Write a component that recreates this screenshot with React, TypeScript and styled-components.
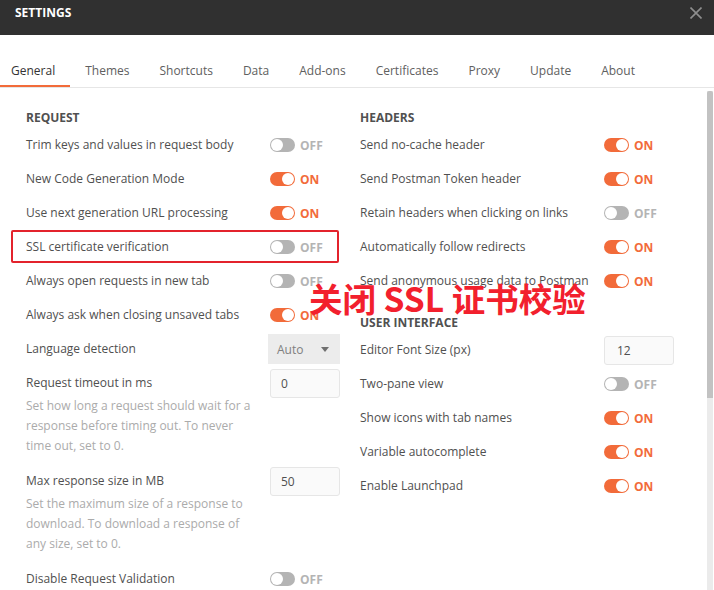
import React from "react";
import styled, { createGlobalStyle } from "styled-components";

const GlobalStyle = createGlobalStyle`
  html, body { margin: 0; padding: 0; background: #ffffff; }
  body { font-family: "Open Sans", "Noto Sans", sans-serif; font-size: 12px; color: #505050; }
  * { box-sizing: border-box; }
`;

const ORANGE = "#f26b3a";

const Window = styled.div`
  position: relative;
  width: 714px;
  height: 590px;
  overflow: hidden;
  display: flex;
  flex-direction: column;
  background: #fff;
`;

const TitleBar = styled.header`
  height: 35px;
  flex: none;
  background: #303030;
  display: flex;
  justify-content: space-between;
  align-items: flex-start;
  padding: 5px 12px 0 15px;
`;

const Title = styled.h1`
  margin: 0;
  font-size: 12px;
  line-height: 16px;
  font-weight: 700;
  color: #ffffff;
`;

const CloseButton = styled.button`
  border: 0;
  background: transparent;
  padding: 0;
  margin-top: 2px;
  width: 12px;
  height: 12px;
  display: flex;
  cursor: pointer;
`;

const TabBar = styled.nav`
  flex: none;
  display: flex;
  padding-top: 21px;
  border-bottom: 1px solid #e6e6e6;
`;

const Tab = styled.div<{ $active?: boolean }>`
  height: 31px;
  line-height: 29px;
  padding: 0 15px;
  font-size: 12px;
  color: ${(p) => (p.$active ? "#333" : "#606060")};
  border-bottom: 2px solid ${(p) => (p.$active ? ORANGE : "transparent")};
  &:first-child { padding-left: 11px; }
`;

const Body = styled.div`
  flex: 1;
  min-height: 0;
  display: flex;
`;

const Content = styled.main`
  flex: 1;
  display: grid;
  grid-template-columns: 314px 314px;
  column-gap: 20px;
  align-content: start;
  padding: 20px 0 0 26px;
`;

const Column = styled.section`
  display: flex;
  flex-direction: column;
`;

const SectionTitle = styled.h2<{ $spaced?: boolean }>`
  margin: ${(p) => (p.$spaced ? "15px" : "0")} 0 0;
  font-size: 12px;
  line-height: 20px;
  font-weight: 700;
  color: #505050;
  text-transform: uppercase;
`;

const Row = styled.div<{ $highlight?: boolean }>`
  position: relative;
  height: 34px;
  display: flex;
  align-items: center;
  justify-content: space-between;
  ${(p) =>
    p.$highlight
      ? `&::before {
    content: "";
    position: absolute;
    left: -15px;
    right: 1px;
    top: 0;
    bottom: 1px;
    border: 2px solid #e3232c;
    border-radius: 2px;
    pointer-events: none;
  }`
      : ""}
`;

const Label = styled.span`
  font-size: 12px;
  line-height: 20px;
  color: #505050;
  white-space: nowrap;
`;

const Control = styled.div`
  width: 70px;
  flex: none;
  display: flex;
  align-items: center;
`;

const Track = styled.span<{ $on: boolean }>`
  position: relative;
  width: 25px;
  height: 14px;
  border-radius: 7px;
  background: ${(p) => (p.$on ? ORANGE : "#b4b4b4")};
  flex: none;
`;

const Knob = styled.span<{ $on: boolean }>`
  position: absolute;
  top: 1px;
  left: ${(p) => (p.$on ? "12px" : "1px")};
  width: 12px;
  height: 12px;
  border-radius: 50%;
  background: #ffffff;
`;

const ToggleText = styled.span<{ $on: boolean }>`
  margin-left: 5px;
  font-size: 12px;
  font-weight: 700;
  color: ${(p) => (p.$on ? ORANGE : "#b4b4b4")};
`;

const Toggle = ({ on }: { on: boolean }) => (
  <Control>
    <Track $on={on}>
      <Knob $on={on} />
    </Track>
    <ToggleText $on={on}>{on ? "ON" : "OFF"}</ToggleText>
  </Control>
);

const SelectBox = styled.div`
  width: 72px;
  height: 30px;
  margin-left: -2px;
  background: #ececec;
  display: flex;
  align-items: center;
  justify-content: space-between;
  padding: 0 11px 0 9px;
  color: #808080;
  font-size: 12px;
`;

const Caret = styled.span`
  width: 0;
  height: 0;
  border-left: 4px solid transparent;
  border-right: 4px solid transparent;
  border-top: 5px solid #707070;
`;

const NumberBox = styled.input<{ $pad?: number }>`
  width: 70px;
  height: 29px;
  border: 1px solid #e6e6e6;
  border-radius: 3px;
  background: #fafafa;
  padding: 0 ${(p) => p.$pad ?? 10}px;
  font-family: "Open Sans", sans-serif;
  font-size: 12px;
  color: #505050;
  outline: none;
`;

const DescRow = styled.div`
  display: flex;
  justify-content: space-between;
  align-items: flex-start;
  padding: 7px 0 8px;
`;

const DescText = styled.div`
  display: flex;
  flex-direction: column;
`;

const Description = styled.p`
  margin: 3px 0 0;
  width: 229px;
  font-size: 12px;
  line-height: 20px;
  color: #ababab;
`;

const InputSlot = styled.div`
  width: 70px;
  margin-top: -4px;
  flex: none;
`;

const ScrollTrack = styled.div`
  width: 6px;
  margin: 3px 1px 0 0;
  background: #ebebeb;
  flex: none;
  display: flex;
  flex-direction: column;
`;

const ScrollThumb = styled.div`
  height: 307px;
  background: #c2c2c2;
  border-radius: 2px 2px 0 0;
`;

const Annotation = styled.div`
  position: absolute;
  left: 309px;
  top: 279px;
  font-family: "Noto Sans CJK SC", "Noto Sans", sans-serif;
  font-size: 33.5px;
  line-height: 38px;
  font-weight: 700;
  color: #f2202d;
  white-space: nowrap;
  pointer-events: none;
`;

const tabs = ["General", "Themes", "Shortcuts", "Data", "Add-ons", "Certificates", "Proxy", "Update", "About"];

const requestToggles: [string, boolean, boolean?][] = [
  ["Trim keys and values in request body", false],
  ["New Code Generation Mode", true],
  ["Use next generation URL processing", true],
  ["SSL certificate verification", false, true],
  ["Always open requests in new tab", false],
  ["Always ask when closing unsaved tabs", true],
];

const headerToggles: [string, boolean][] = [
  ["Send no-cache header", true],
  ["Send Postman Token header", true],
  ["Retain headers when clicking on links", false],
  ["Automatically follow redirects", true],
  ["Send anonymous usage data to Postman", true],
];

const uiToggles: [string, boolean][] = [
  ["Two-pane view", false],
  ["Show icons with tab names", true],
  ["Variable autocomplete", true],
  ["Enable Launchpad", true],
];

export default function App() {
  return (
    <>
      <GlobalStyle />
      <Window>
        <TitleBar>
          <Title>SETTINGS</Title>
          <CloseButton aria-label="Close">
            <svg width="12" height="12" viewBox="0 0 12 12">
              <path d="M0.5 0.5 L11.5 11.5 M11.5 0.5 L0.5 11.5" stroke="#8e8e8e" strokeWidth="1.6" />
            </svg>
          </CloseButton>
        </TitleBar>
        <TabBar>
          {tabs.map((t, i) => (
            <Tab key={t} $active={i === 0}>
              {t}
            </Tab>
          ))}
        </TabBar>
        <Body>
          <Content>
            <Column>
              <SectionTitle>Request</SectionTitle>
              {requestToggles.map(([label, on, hl]) => (
                <Row key={label} $highlight={hl}>
                  <Label>{label}</Label>
                  <Toggle on={on} />
                </Row>
              ))}
              <Row>
                <Label>Language detection</Label>
                <Control>
                  <SelectBox>
                    <span>Auto</span>
                    <Caret />
                  </SelectBox>
                </Control>
              </Row>
              <DescRow>
                <DescText>
                  <Label>Request timeout in ms</Label>
                  <Description>
                    Set how long a request should wait for a response before timing out. To never time out, set to 0.
                  </Description>
                </DescText>
                <InputSlot>
                  <NumberBox defaultValue="0" readOnly />
                </InputSlot>
              </DescRow>
              <DescRow>
                <DescText>
                  <Label>Max response size in MB</Label>
                  <Description>
                    Set the maximum size of a response to download. To download a response of any size, set to 0.
                  </Description>
                </DescText>
                <InputSlot>
                  <NumberBox defaultValue="50" readOnly />
                </InputSlot>
              </DescRow>
              <Row>
                <Label>Disable Request Validation</Label>
                <Toggle on={false} />
              </Row>
            </Column>
            <Column>
              <SectionTitle>Headers</SectionTitle>
              {headerToggles.map(([label, on]) => (
                <Row key={label}>
                  <Label>{label}</Label>
                  <Toggle on={on} />
                </Row>
              ))}
              <SectionTitle $spaced>User Interface</SectionTitle>
              <Row>
                <Label>Editor Font Size (px)</Label>
                <Control>
                  <NumberBox defaultValue="12" readOnly $pad={12} />
                </Control>
              </Row>
              {uiToggles.map(([label, on]) => (
                <Row key={label}>
                  <Label>{label}</Label>
                  <Toggle on={on} />
                </Row>
              ))}
            </Column>
          </Content>
          <ScrollTrack>
            <ScrollThumb />
          </ScrollTrack>
        </Body>
        <Annotation>关闭 SSL 证书校验</Annotation>
      </Window>
    </>
  );
}
